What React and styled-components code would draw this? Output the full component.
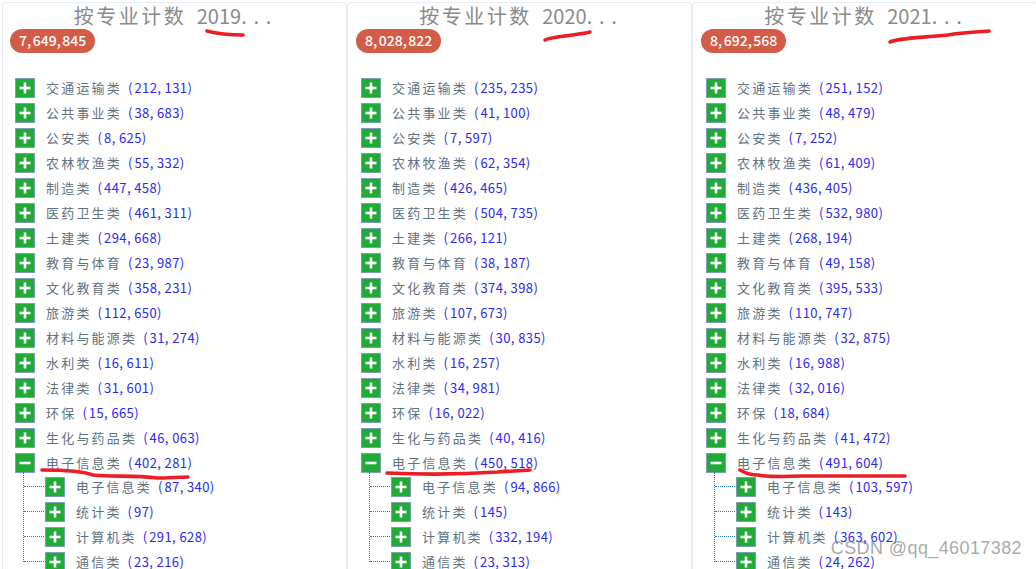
import styled, { createGlobalStyle } from "styled-components";

const GlobalStyle = createGlobalStyle`
  html, body {
    margin: 0;
    padding: 0;
    background: #fff;
    overflow: hidden;
  }
  body {
    width: 1036px;
    height: 569px;
    font-family: "Noto Sans CJK SC", "Noto Sans", sans-serif;
  }
`;

const names = [
  "交通运输类", "公共事业类", "公安类", "农林牧渔类", "制造类", "医药卫生类", "土建类", "教育与体育",
  "文化教育类", "旅游类", "材料与能源类", "水利类", "法律类", "环保", "生化与药品类",
];
const childNames = ["电子信息类", "统计类", "计算机类", "通信类"];

const years = [
  {
    year: "2019",
    total: "7,649,845",
    counts: ["212,131", "38,683", "8,625", "55,332", "447,458", "461,311", "294,668", "23,987", "358,231", "112,650", "31,274", "16,611", "31,601", "15,665", "46,063"],
    open: "402,281",
    children: ["87,340", "97", "291,628", "23,216"],
    titleMark: "M204 28 C215 31 228 32 240 32",
    rowMark: "M39 467 C60 467 80 468 90 472 C110 474 130 472 155 475 C165 475 175 474 185 474",
  },
  {
    year: "2020",
    total: "8,028,822",
    counts: ["235,235", "41,100", "7,597", "62,354", "426,465", "504,735", "266,121", "38,187", "374,398", "107,673", "30,835", "16,257", "34,981", "16,022", "40,416"],
    open: "450,518",
    children: ["94,866", "145", "332,194", "23,313"],
    titleMark: "M197 37 C205 33 225 33 242 29",
    rowMark: "M39 470 C80 472 120 471 150 469 C160 468 170 468 182 467",
  },
  {
    year: "2021",
    total: "8,692,568",
    counts: ["251,152", "48,479", "7,252", "61,409", "436,405", "532,980", "268,194", "49,158", "395,533", "110,747", "32,875", "16,988", "32,016", "18,684", "41,472"],
    open: "491,604",
    children: ["103,597", "143", "363,602", "24,262"],
    titleMark: "M197 39 C205 35 225 35 255 32 C270 29 285 29 296 28",
    rowMark: "M47 467 C52 470 58 472 65 472 C75 474 85 474 110 473 C150 473 180 473 212 473",
  },
];

const Page = styled.main`
  position: relative;
  display: grid;
  grid-template-columns: repeat(3, 345px);
  width: 1036px;
  height: 569px;
  padding: 2px 0 0 2px;
  box-sizing: border-box;
  overflow: hidden;
`;

const Panel = styled.section`
  position: relative;
  height: 600px;
  padding: 1px 0 0 1px;
  box-sizing: border-box;
  background: #fff;
  border: 1px solid #e4ecf2;
  border-radius: 4px;

  &:first-child {
    padding-left: 0;
  }
`;

const Title = styled.h3`
  margin: 0;
  height: 23px;
  padding-left: 3px;
  font-size: 20px;
  line-height: 24px;
  font-weight: 400;
  letter-spacing: 2.5px;
  word-spacing: 3.5px;
  text-align: center;
  color: #8a8a8a;
  white-space: nowrap;
`;

const Year = styled.span`
  letter-spacing: 0;
`;

const Dots = styled.span`
  letter-spacing: 6.8px;
`;

const Badge = styled.span`
  display: inline-block;
  margin-left: 7px;
  padding: 0 9px;
  height: 24px;
  border-radius: 12px;
  background: #d35c48;
  color: #fff;
  font-size: 14px;
  font-weight: 500;
  line-height: 23px;
`;

const Sep = styled.span`
  letter-spacing: ${(props) => props.$gap}px;
`;

const Tree = styled.ul`
  list-style: none;
  margin: 22px 0 0;
  padding: 0 0 0 12px;
`;

const Row = styled.li`
  display: flex;
  align-items: center;
  height: 25px;
  font-size: 13px;
  white-space: nowrap;
`;

const Toggle = styled.span`
  flex: none;
  display: flex;
  align-items: center;
  justify-content: center;
  width: 18px;
  height: 18px;
  margin-right: 11px;
  background: #20ab37;
  border: 1px solid #7f9db9;
`;

const Name = styled.span`
  letter-spacing: 2.2px;
  color: #5f7282;
`;

const Count = styled.span`
  margin-left: 6px;
  letter-spacing: 0.4px;
  color: #2a2af0;
`;

const Children = styled.ul`
  position: relative;
  list-style: none;
  margin: -1px 0 0;
  padding: 0 0 0 30px;

  &::before {
    content: "";
    position: absolute;
    left: 8px;
    top: -2px;
    bottom: 12px;
    border-left: 1px dotted #2f7fa8;
  }
`;

const ChildRow = styled(Row)`
  position: relative;

  &::before {
    content: "";
    position: absolute;
    left: -21px;
    width: 20px;
    border-top: 1px dotted #2f7fa8;
  }
`;

const Marks = styled.svg`
  position: absolute;
  left: 0;
  top: 0;
  width: 345px;
  height: 569px;
  pointer-events: none;
`;

const Watermark = styled.span`
  position: absolute;
  right: 14px;
  bottom: 10px;
  font-family: "Liberation Sans", sans-serif;
  font-size: 18px;
  letter-spacing: 0.4px;
  color: rgba(120, 120, 120, 0.65);
`;

const spaced = (value, gap) =>
  value.split(",").map((part, i, all) => (
    <span key={part + i}>
      {part}
      {i < all.length - 1 && <Sep $gap={gap}>,</Sep>}
    </span>
  ));

const ToggleIcon = ({ open }) => (
  <Toggle>
    <svg width="12" height="12" viewBox="0 0 12 12">
      <rect x="0.5" y="4.7" width="11" height="2.6" fill="#fff" />
      {!open && <rect x="4.7" y="0.5" width="2.6" height="11" fill="#fff" />}
    </svg>
  </Toggle>
);

const Item = ({ as: Wrapper = Row, name, count, open }) => (
  <Wrapper>
    <ToggleIcon open={open} />
    <Name>{name}</Name>
    <Count>
      <Sep $gap={2}>(</Sep>
      {spaced(count, 3.7)})
    </Count>
  </Wrapper>
);

const YearPanel = ({ data }) => (
  <Panel>
    <Title>
      按专业计数 <Year>{data.year}</Year>
      <Dots>...</Dots>
    </Title>
    <Badge>{spaced(data.total, 1.5)}</Badge>
    <Tree>
      {names.map((name, i) => (
        <Item key={name} name={name} count={data.counts[i]} />
      ))}
      <Item name="电子信息类" count={data.open} open />
      <li>
        <Children>
          {childNames.map((name, i) => (
            <Item key={name} as={ChildRow} name={name} count={data.children[i]} />
          ))}
        </Children>
      </li>
    </Tree>
    <Marks viewBox="0 0 345 569" fill="none" stroke="#ee1c25" strokeWidth="3.6" strokeLinecap="round">
      <path d={data.titleMark} />
      <path d={data.rowMark} />
    </Marks>
  </Panel>
);

export default function App() {
  return (
    <>
      <GlobalStyle />
      <Page>
        {years.map((data) => (
          <YearPanel key={data.year} data={data} />
        ))}
        <Watermark>CSDN @qq_46017382</Watermark>
      </Page>
    </>
  );
}
